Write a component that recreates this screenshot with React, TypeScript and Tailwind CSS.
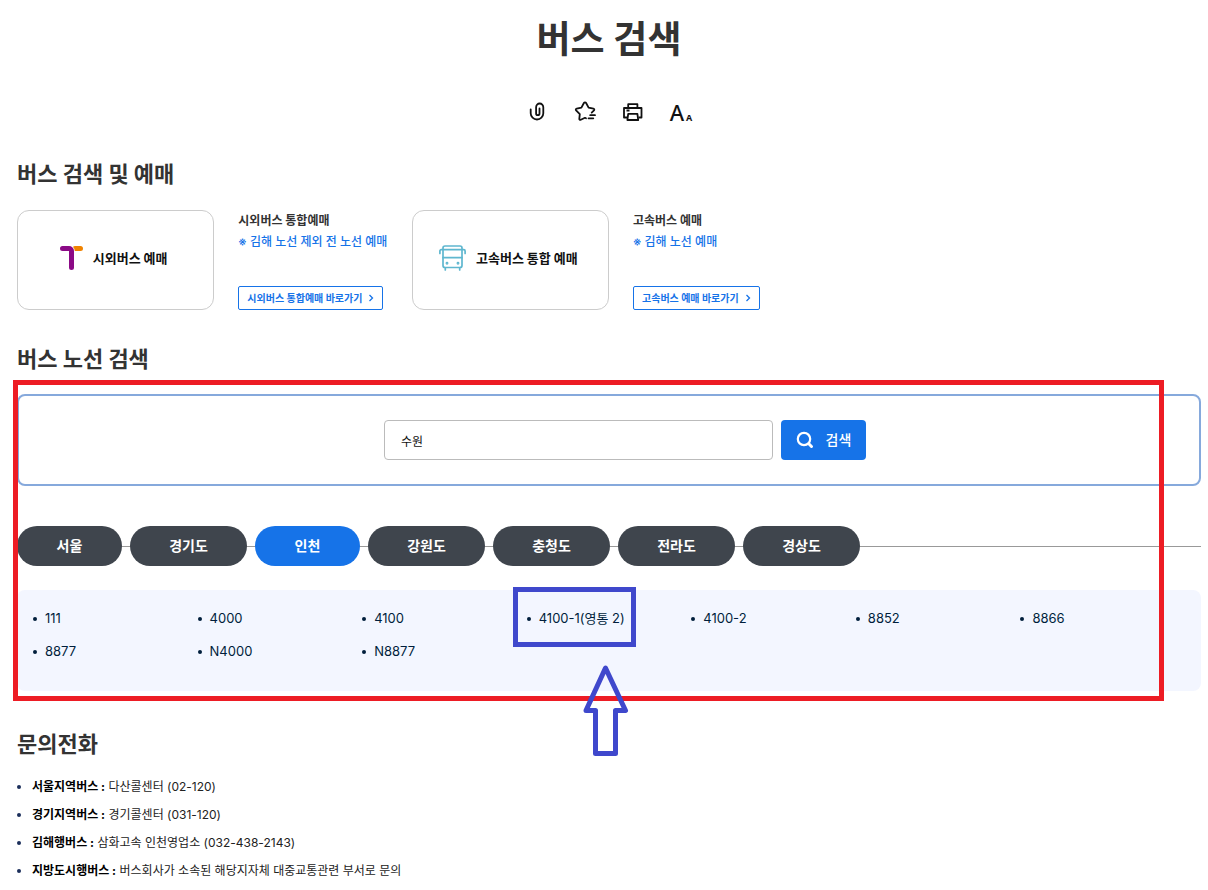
import { useState } from "react";
import clsx from "clsx";

const regions = ["서울", "경기도", "인천", "강원도", "충청도", "전라도", "경상도"];

const routes = ["111", "4000", "4100", "4100-1(영통 2)", "4100-2", "8852", "8866", "8877", "N4000", "N8877"];

const contacts = [
  { name: "서울지역버스 :", info: "다산콜센터 (02-120)" },
  { name: "경기지역버스 :", info: "경기콜센터 (031-120)" },
  { name: "김해행버스 :", info: "삼화고속 인천영업소 (032-438-2143)" },
  { name: "지방도시행버스 :", info: "버스회사가 소속된 해당지자체 대중교통관련 부서로 문의" },
];

function ClipIcon() {
  return (
    <svg width="24" height="24" viewBox="0 0 24 24" fill="none" stroke="#111" strokeWidth="1.8" strokeLinecap="round">
      <path d="M5.7 9.5v3.800a6.300 6.200 0 0 0 12.600 0V7.300a3.600 3.800 0 0 0-7.200 0v6.200a1.700 1.700 0 0 0 3.400 0V8.500" />
    </svg>
  );
}

function StarIcon() {
  return (
    <svg width="24" height="24" viewBox="0 0 24 24" fill="none" stroke="#111" strokeWidth="1.800" strokeLinecap="round" strokeLinejoin="round">
      <path d="M13 18.300 12 17.800l-4.200 2c-.8.400-1.600-.1-1.500-1l.5-4.700-3.700-3.700c-.600-.700-.300-1.600.600-1.800l4.700-.9L10.900 3c.5-.9 1.700-.9 2.200 0l2.500 4.700 4.800.900c.900.200 1.200 1.100.600 1.800L18.700 12.600" />
      <path d="M17.200 15.200h4.800M15.500 18.300h4.800" />
    </svg>
  );
}

function PrintIcon() {
  return (
    <svg width="24" height="24" viewBox="0 0 24 24" fill="none" stroke="#111" strokeWidth="1.800" strokeLinejoin="round">
      <path d="M7.200 7.500V4.200h9.200V7.500" />
      <path d="M6 17.500H3V8h17.500v9.500h-3" />
      <path d="M7.200 13.800h9.200l.8 6.200H6.400zM5.500 10.500h3" />
    </svg>
  );
}

function IntercityLogo() {
  return (
    <svg width="23" height="24" viewBox="0 0 23 24" fill="none" strokeLinecap="round">
      <path d="M15 2.500h5.500" stroke="#f08300" strokeWidth="5" />
      <path d="M2.500 2.500H9a2.500 2.500 0 0 1 2.500 2.500V21.500" stroke="#fff" strokeWidth="6.500" />
      <path d="M2.500 2.500H9a2.500 2.500 0 0 1 2.500 2.500V21.500" stroke="#8b0a86" strokeWidth="5" />
    </svg>
  );
}

function BusIcon() {
  return (
    <svg width="27" height="26" viewBox="0 0 27 26" fill="none" stroke="#5fb7cf" strokeWidth="1.700" strokeLinecap="round">
      <rect x="4" y="1" width="19" height="21.500" rx="2" />
      <path d="M4 4.700H23M4 12.700H23M4 4.700H2.200A1.300 1.300 0 0 0 .9 6V8.500M23 4.700h1.800A1.300 1.300 0 0 1 26.100 6V8.500" />
      <path d="M6.300 23v2M20.700 23v2" />
      <circle cx="8" cy="18.200" r=".600" />
      <circle cx="19" cy="18.200" r=".600" />
    </svg>
  );
}

function Heading({ text }: { text: string }) {
  return <h2 className="text-[22px] leading-8 font-bold text-[#333]">{text}</h2>;
}

function Booking({ icon, label, title, note, link }: {
  icon: React.ReactNode; label: string; title: string; note: string; link: string;
}) {
  return (
    <div className="flex h-[100px] gap-6">
      <a href="#" className="flex w-1/2 shrink-0 items-center justify-center gap-[10px] rounded-xl border border-[#ccc] pr-1 pb-1 font-['Noto_Sans_CJK_KR',sans-serif] text-[13px] leading-5 font-bold whitespace-nowrap text-[#111]">
        {icon}
        {label}
      </a>
      <div className="flex flex-col items-start whitespace-nowrap">
        <p className="text-xs leading-[21px] font-bold text-[#333]">{title}</p>
        <p className="text-xs leading-[21px] font-medium text-[#1673e8]">{note}</p>
        <a href="#" className="mt-auto flex h-6 items-center gap-[6px] rounded-xs border border-[#1673e8] px-2 text-[10px] font-bold text-[#1673e8]">
          {link}
          <svg width="6" height="8" viewBox="0 0 6 8" fill="none" stroke="currentColor" strokeWidth="1.3">
            <path d="M1.500 1 4.500 4 1.500 7" />
          </svg>
        </a>
      </div>
    </div>
  );
}

export default function App() {
  const [keyword, setKeyword] = useState("수원");
  const [region, setRegion] = useState("인천");

  return (
    <main className="bg-white pt-4 pr-[7px] pl-[17px] font-[Inter,'Noto_Sans_CJK_KR',sans-serif]">
      <h1 className="text-center text-[37px] leading-12 font-bold text-[#333]">버스 검색</h1>
      <div className="mt-9 flex justify-center gap-6">
        <button aria-label="주소 복사"><ClipIcon /></button>
        <button aria-label="즐겨찾기"><StarIcon /></button>
        <button aria-label="인쇄"><PrintIcon /></button>
        <button aria-label="글자 크기" className="flex h-6 w-6 items-baseline justify-center gap-[2px] font-['Noto_Sans'] leading-6 text-[#111]">
          <span className="text-[22px] font-medium">A</span>
          <span className="text-[9px] font-bold">A</span>
        </button>
      </div>

      <section className="mt-[34px]">
        <Heading text="버스 검색 및 예매" />
        <div className="mt-5 grid grid-cols-3">
          <Booking icon={<IntercityLogo />} label="시외버스 예매" title="시외버스 통합예매" note="※ 김해 노선 제외 전 노선 예매" link="시외버스 통합예매 바로가기" />
          <Booking icon={<BusIcon />} label="고속버스 통합 예매" title="고속버스 예매" note="※ 김해 노선 예매" link="고속버스 예매 바로가기" />
        </div>
      </section>

      <section className="mt-[33px]">
        <Heading text="버스 노선 검색" />
        <div className="relative mt-[19px]">
          <form className="flex justify-center gap-2 rounded-lg border-2 border-[#86a9dc] py-6 pl-8" onSubmit={(e) => e.preventDefault()}>
            <input
              aria-label="노선 검색어"
              value={keyword}
              onChange={(e) => setKeyword(e.target.value)}
              className="h-10 w-[389px] rounded-sm border border-[#bbb] px-4 text-xs text-[#111]"
            />
            <button className="flex h-10 w-[85px] items-center justify-center gap-3 rounded-sm bg-[#1673e8] text-sm font-medium text-white">
              <svg width="18" height="18" viewBox="0 0 18 18" fill="none" stroke="white" strokeWidth="2.2" strokeLinecap="round">
                <circle cx="8" cy="8" r="6.200" />
                <path d="m12.800 12.800 2.700 2.700" strokeWidth="3" />
              </svg>
              검색
            </button>
          </form>

          <div className="relative mt-10 flex gap-2 before:absolute before:inset-x-0 before:top-5 before:h-px before:bg-[#999]">
            {regions.map((name) => (
              <button
                key={name}
                onClick={() => setRegion(name)}
                className={clsx(
                  "relative h-10 rounded-full text-sm font-bold text-white",
                  name.length > 2 ? "w-[117px]" : "w-[105px]",
                  name === region ? "bg-[#1673e8]" : "bg-[#3f454d]"
                )}
              >
                {name}
              </button>
            ))}
          </div>

          <ul className="mt-6 grid grid-cols-7 rounded-lg bg-[#f3f6ff] px-4 pt-3 pb-[23px]">
            {routes.map((route) => (
              <li key={route} className="relative flex h-[33px] items-center gap-2 text-[13px] whitespace-nowrap text-[#001e3c]">
                <span className="h-1 w-1 rounded-full bg-[#001e3c]" />
                {route}
                {route.startsWith("4100-1") && (
                  <>
                    <span className="absolute -top-[15px] -left-[14px] z-20 h-[60px] w-[123px] border-5 border-[#3f48cc]" />
                    <svg className="absolute top-[63px] left-14 z-20" width="46" height="92" viewBox="0 0 46 92" fill="none" stroke="#3f48cc" strokeWidth="5" strokeLinejoin="round">
                      <path d="M22.500 3 42.500 45.500H32.500V88.500H12.500V45.500H3z" />
                    </svg>
                  </>
                )}
              </li>
            ))}
          </ul>

          <div className="pointer-events-none absolute -top-[14px] right-[37px] -bottom-[10px] -left-1 z-10 border-5 border-[#ed1c24]" />
        </div>
      </section>

      <section className="mt-[37px]">
        <Heading text="문의전화" />
        <ul className="mt-[13px]">
          {contacts.map((contact) => (
            <li key={contact.name} className="flex items-center gap-[11px] text-xs leading-7 text-[#222]">
              <span className="h-1 w-1 rounded-full bg-[#1b2f5b]" />
              <p><strong className="font-bold text-black">{contact.name}</strong> {contact.info}</p>
            </li>
          ))}
        </ul>
      </section>
    </main>
  );
}
